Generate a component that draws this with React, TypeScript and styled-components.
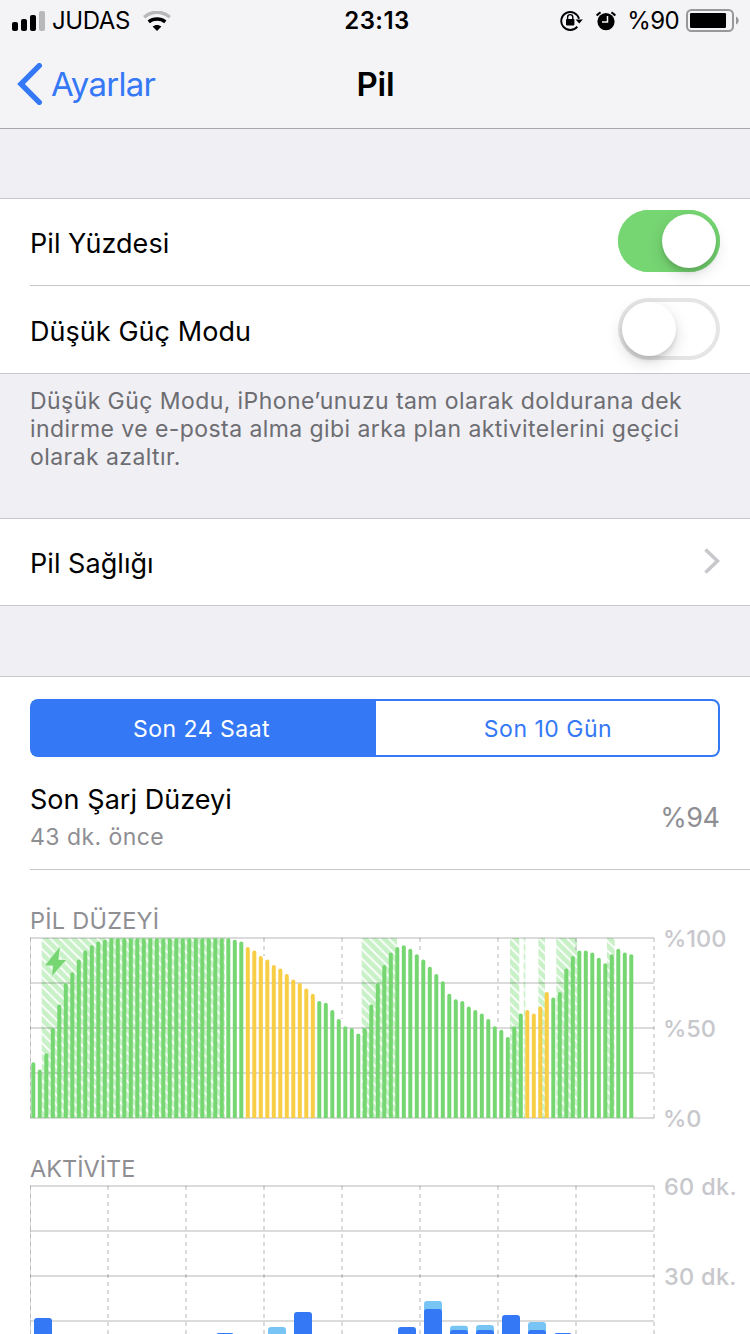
import React from "react";
import styled, { createGlobalStyle, css } from "styled-components";

const BLUE = "#3478f6";
const GREEN = "#76d672";
const YELLOW = "#f8ce46";
const HAIRLINE = "#c8c7cc";

const GlobalStyle = createGlobalStyle`
  * { box-sizing: border-box; }
  body {
    margin: 0;
    overflow: hidden;
    font-family: Inter, "Liberation Sans", sans-serif;
    color: #000;
  }
`;

const Screen = styled.div`
  width: 750px;
  height: 1334px;
  overflow: hidden;
  display: flex;
  flex-direction: column;
  background: #efeff4;
`;

const Header = styled.header`
  flex: none;
  height: 129px;
  background: #f4f4f7;
  border-bottom: 1px solid #a7a7aa;
`;

const StatusBar = styled.div`
  height: 40px;
  padding: 0 11px 0 12px;
  display: grid;
  grid-template-columns: 1fr auto 1fr;
  align-items: center;
  font-size: 24px;
  line-height: 40px;
`;

const StatusSide = styled.div<{ $end?: boolean }>`
  display: flex;
  align-items: center;
  height: 40px;
  justify-content: ${(p) => (p.$end ? "flex-end" : "flex-start")};
`;

const Carrier = styled.span`
  margin: 1px 13px 0 7px;
  font-size: 24px;
  letter-spacing: -0.4px;
`;

const Clock = styled.span`
  font-weight: 600;
  font-size: 24px;
  letter-spacing: 0.4px;
  padding: 1px 0 0 3px;
`;

const Percent = styled.span`
  margin: 1px 7px 0 12px;
  font-size: 24px;
  letter-spacing: -0.6px;
`;

const NavBar = styled.nav`
  height: 88px;
  padding: 0 17px;
  display: grid;
  grid-template-columns: 1fr auto 1fr;
  align-items: center;
`;

const BackLink = styled.a`
  display: flex;
  align-items: center;
  gap: 8px;
  color: ${BLUE};
  font-size: 33px;
  letter-spacing: -0.75px;
`;

const NavTitle = styled.h1`
  margin: 0 0 0 1px;
  font-size: 33px;
  font-weight: 600;
  letter-spacing: -0.2px;
`;

const Group = styled.section<{ $top: number }>`
  flex: none;
  margin-top: ${(p) => p.$top}px;
  background: #fff;
  border-top: 1px solid ${HAIRLINE};
  border-bottom: 1px solid ${HAIRLINE};
`;

const Row = styled.div<{ $height: number; $divided?: boolean }>`
  height: ${(p) => p.$height}px;
  margin-left: 30px;
  padding-right: 30px;
  display: flex;
  align-items: center;
  justify-content: space-between;
  ${(p) => p.$divided && css`border-bottom: 1px solid ${HAIRLINE};`}
`;

const RowTitle = styled.span<{ $drop?: number }>`
  font-size: 27px;
  line-height: 34px;
  letter-spacing: 0.05px;
  padding-top: ${(p) => p.$drop ?? 3}px;
`;

const Switch = styled.span<{ $on?: boolean }>`
  width: 102px;
  height: 62px;
  margin-top: ${(p) => (p.$on ? -2 : -1)}px;
  border-radius: 31px;
  padding: 4px;
  display: flex;
  justify-content: ${(p) => (p.$on ? "flex-end" : "flex-start")};
  background: ${(p) => (p.$on ? GREEN : "#fff")};
  box-shadow: inset 0 0 0 4px ${(p) => (p.$on ? GREEN : "#e5e5e5")};
`;

const Knob = styled.span`
  width: 54px;
  height: 54px;
  border-radius: 50%;
  background: #fff;
  box-shadow: 0 6px 16px rgba(0, 0, 0, 0.15), 0 4px 4px rgba(0, 0, 0, 0.1);
`;

const Footnote = styled.p`
  flex: none;
  height: 144px;
  margin: 0;
  padding: 13px 30px 0;
  font-size: 23px;
  line-height: 28px;
  letter-spacing: 0.43px;
  color: #6d6d72;
  white-space: pre-line;
`;

const Panel = styled(Group)`
  height: 700px;
  padding-top: 22px;
`;

const Segmented = styled.div`
  height: 58px;
  margin: 0 30px;
  padding: 2px;
  display: flex;
  background: ${BLUE};
  border-radius: 8px;
`;

const Segment = styled.button<{ $active?: boolean }>`
  flex: none;
  width: ${(p) => (p.$active ? 344 : 342)}px;
  border: 0;
  border-radius: ${(p) => (p.$active ? "0" : "0 6px 6px 0")};
  padding: ${(p) => (p.$active ? "2px 5px 0 0" : "2px 0 0 2px")};
  font: 400 23px Inter, sans-serif;
  letter-spacing: 0.5px;
  color: ${(p) => (p.$active ? "#fff" : BLUE)};
  background: ${(p) => (p.$active ? BLUE : "#fff")};
`;

const ChargeRow = styled.div`
  height: 113px;
  margin-left: 30px;
  padding: 24px 30px 0 0;
  display: flex;
  justify-content: space-between;
  border-bottom: 1px solid ${HAIRLINE};
`;

const ChargeLabel = styled.div`
  display: flex;
  flex-direction: column;
  gap: 3px;
`;

const ChargeTitle = styled.span`
  font-size: 27px;
  line-height: 38px;
  letter-spacing: 0.05px;
`;

const ChargeTime = styled.span`
  font-size: 23px;
  line-height: 30px;
  letter-spacing: 0.45px;
  color: #8e8e93;
`;

const ChargeValue = styled.span`
  padding: 19px 0.5px 0 0;
  font-size: 27px;
  line-height: 36px;
  letter-spacing: -0.5px;
  color: #8e8e93;
`;

const ChartTitle = styled.h2<{ $top: number; $tracking?: number }>`
  margin: ${(p) => p.$top}px 0 0 30px;
  height: 31px;
  font-size: 23.5px;
  line-height: 30px;
  font-weight: 400;
  letter-spacing: ${(p) => p.$tracking ?? 0}px;
  color: #8e8e93;
`;

const ChartRow = styled.div`
  display: flex;
  padding-left: 30px;
  height: 182px;
  & > svg { flex: none; display: block; }
`;

const Axis = styled.div<{ $left: number; $tracking: number }>`
  margin: -13px 0 0 ${(p) => p.$left}px;
  display: flex;
  flex-direction: column;
  gap: 60px;
  font-size: 23.5px;
  line-height: 30px;
  font-weight: 500;
  letter-spacing: ${(p) => p.$tracking}px;
  color: #c7c7cc;
  white-space: nowrap;
`;

const levels: number[] = [
  31, 27, 36, 50, 63, 75, 81, 88, 93, 96, 98, 99,
  ...Array<number>(19).fill(100),
  99, 98, 95, 93, 90, 88, 85, 83, 80, 77, 75, 72, 69,
  65, 64, 60, 55, 51, 50, 47, 50, 63, 75, 85, 92, 95, 96, 94, 91, 88, 84, 80, 76,
  69, 66, 65, 62, 60, 58, 55, 51, 49, 45, 51, 58, 60, 58, 62, 70, 67, 70, 83, 90,
  93, 93, 92, 89, 86, 91, 94, 92, 91,
];

const lowPower = (i: number) => (i >= 33 && i <= 43) || (i >= 76 && i <= 79);

/* charging spans, [start, end] along the plot */
const charging: [number, number][] = [
  [11.7, 195], [331.7, 367], [480, 489.3], [493.7, 495.3], [508.3, 515], [526.3, 547], [577, 584.7],
];

const GRID = "rgba(0,0,0,0.14)";

const Grid = ({ rows, ends }: { rows: number; ends: number[] }) => (
  <g>
    {Array.from({ length: rows }, (_, i) => (
      <rect key={`h${i}`} x={0} y={i * 45} width={624} height={2} fill={GRID} />
    ))}
    <rect x={0} y={1} width={1} height={180} fill={GRID} />
    {ends.map((end, i) => (
      <line
        key={`v${i}`}
        x1={i === 0 ? 0.5 : i * 78}
        x2={i === 0 ? 0.5 : i * 78}
        y1={1}
        y2={end}
        stroke={GRID}
        strokeWidth={i === 0 ? 1 : 2}
        strokeDasharray="4 4"
      />
    ))}
  </g>
);

const BatteryChart = () => (
  <svg width={626} height={182} viewBox="0 0 626 182">
    <defs>
      <pattern id="hatch" width={9.4} height={9.4} patternUnits="userSpaceOnUse">
        <rect width={9.4} height={9.4} fill="#c9f1c8" />
        <path d="M-2 -2L11.4 11.4M-2 7.4L2 11.4M7.4 -2L11.4 2" stroke="#fff" strokeWidth={1.8} />
      </pattern>
    </defs>
    {charging.map(([a, b]) => (
      <rect key={a} x={a} y={1} width={b - a} height={180} fill="url(#hatch)" />
    ))}
    <Grid rows={5} ends={[181, 1, 1, 19, 82, 13, 85, 13, 181]} />
    {levels.map((v, i) => {
      const y = 181 - v * 1.8;
      return (
        <path
          key={i}
          d={`M${1.3 + i * 6.5} 181V${y + 2}q0-2 2-2t2 2V181z`}
          fill={lowPower(i) ? YELLOW : GREEN}
        />
      );
    })}
    <path
      d="M29.8 10L15 28.5h8.300L21.800 39 36 23h-7.700z"
      fill={GREEN}
      stroke="#d8f5d7"
      strokeWidth={2}
      paintOrder="stroke"
    />
  </svg>
);

type Activity = { slot: number; on: number; off?: number };
const activity: Activity[] = [
  { slot: 0, on: 133 },
  { slot: 7, on: 148 },
  { slot: 9, on: 160, off: 142 },
  { slot: 10, on: 127 },
  { slot: 14, on: 142 },
  { slot: 15, on: 124, off: 116 },
  { slot: 16, on: 145, off: 140.7 },
  { slot: 17, on: 145, off: 140 },
  { slot: 18, on: 130 },
  { slot: 19, on: 145, off: 137 },
  { slot: 20, on: 148 },
];

const ActivityChart = () => (
  <svg width={626} height={182} viewBox="0 0 626 182">
    <Grid rows={5} ends={Array<number>(9).fill(181)} />
    {activity.map(({ slot, on, off }) => (
      <g key={slot}>
        {off !== undefined && (
          <rect x={4 + slot * 26} y={off} width={18} height={181 - off} rx={3} fill="#78c5f5" />
        )}
        <rect x={4 + slot * 26} y={on} width={18} height={181 - on} rx={3} fill={BLUE} />
      </g>
    ))}
  </svg>
);

const SignalIcon = () => (
  <svg width={33} height={20} viewBox="0 0 33 20">
    <rect x={0} y={11} width={6} height={9} rx={2} />
    <rect x={9} y={8} width={6} height={12} rx={2} />
    <rect x={18} y={4} width={6} height={16} rx={2} />
    <rect x={27} y={0} width={6} height={20} rx={2} fill="#b8b8ba" />
  </svg>
);

const WifiIcon = () => (
  <svg width={28} height={20} viewBox="0 0 28 20">
    <path d="M1.200 6.200C8.500-.4 19.500-.4 26.800 6.200" fill="none" stroke="#b8b8ba" strokeWidth={3.4} />
    <path d="M5.700 10.900c4.800-3.800 11.800-3.800 16.600 0" fill="none" stroke="#000" strokeWidth={3.6} />
    <path d="M9.600 15.600c2.600-2.300 6.200-2.300 8.800 0L14 20z" />
  </svg>
);

const LockIcon = () => (
  <svg width={23} height={22} viewBox="0 0 23 22">
    <path d="M17.300 16.600A9 9 0 1 1 19 8.800" fill="none" stroke="#000" strokeWidth={1.9} />
    <path d="M15.600 9.400h7.200L19.200 13.600z" />
    <rect x={6} y={9} width={8.4} height={6.4} rx={0.8} />
    <path d="M7.600 9.500V7.200a2.600 2.600 0 0 1 5.200 0v2.300" fill="none" stroke="#000" strokeWidth={1.4} />
  </svg>
);

const AlarmIcon = () => (
  <svg width={20} height={20} viewBox="0 0 20 20">
    <circle cx={10} cy={10.6} r={8.6} />
    <path d="M.8 4.600A12 12 0 0 1 4.600 1.400M15.400 1.400a12 12 0 0 1 3.800 3.200" fill="none" stroke="#000" strokeWidth={2.2} />
    <path d="M11.500 5v6H6" fill="none" stroke="#f4f4f7" strokeWidth={1.5} />
  </svg>
);

const BatteryIcon = () => (
  <svg width={53} height={23} viewBox="0 0 53 23">
    <rect x={1} y={1} width={46} height={21} rx={4.5} fill="none" stroke="#98989a" strokeWidth={2} />
    <rect x={4} y={4} width={36} height={15} rx={1.2} />
    <path d="M50 7.500c3.600 1.500 3.600 6.500 0 8z" fill="#98989a" />
  </svg>
);

const BackIcon = () => (
  <svg width={26} height={42} viewBox="0 0 26 42">
    <path d="M22.300 2.700L4 21l18.300 18.300" fill="none" stroke={BLUE} strokeWidth={5.4} strokeLinecap="round" />
  </svg>
);

const ChevronIcon = () => (
  <svg width={16} height={26} viewBox="0 0 16 26">
    <path d="M1.500 1.500L13.500 13 1.500 24.500" fill="none" stroke="#c7c7cc" strokeWidth={3.6} />
  </svg>
);

const AlarmSlot = styled.span`
  display: flex;
  margin: 0 -1px 0 13px;
`;

const ChevronSlot = styled.span`
  display: flex;
  margin-top: -2px;
`;

export default function App() {
  return (
    <>
      <GlobalStyle />
      <Screen>
        <Header>
          <StatusBar>
            <StatusSide>
              <SignalIcon />
              <Carrier>JUDAS</Carrier>
              <WifiIcon />
            </StatusSide>
            <Clock>23:13</Clock>
            <StatusSide $end>
              <LockIcon />
              <AlarmSlot><AlarmIcon /></AlarmSlot>
              <Percent>%90</Percent>
              <BatteryIcon />
            </StatusSide>
          </StatusBar>
          <NavBar>
            <BackLink><BackIcon />Ayarlar</BackLink>
            <NavTitle>Pil</NavTitle>
          </NavBar>
        </Header>

        <Group $top={69}>
          <Row $height={87} $divided>
            <RowTitle>Pil Yüzdesi</RowTitle>
            <Switch $on><Knob /></Switch>
          </Row>
          <Row $height={87}>
            <RowTitle $drop={5}>Düşük Güç Modu</RowTitle>
            <Switch><Knob /></Switch>
          </Row>
        </Group>
        <Footnote>
          {"Düşük Güç Modu, iPhone’unuzu tam olarak doldurana dek\nindirme ve e-posta alma gibi arka plan aktivitelerini geçici\nolarak azaltır."}
        </Footnote>

        <Group $top={0}>
          <Row $height={86}>
            <RowTitle>Pil Sağlığı</RowTitle>
            <ChevronSlot><ChevronIcon /></ChevronSlot>
          </Row>
        </Group>

        <Panel $top={70}>
          <Segmented>
            <Segment $active>Son 24 Saat</Segment>
            <Segment>Son 10 Gün</Segment>
          </Segmented>
          <ChargeRow>
            <ChargeLabel>
              <ChargeTitle>Son Şarj Düzeyi</ChargeTitle>
              <ChargeTime>43 dk. önce</ChargeTime>
            </ChargeLabel>
            <ChargeValue>%94</ChargeValue>
          </ChargeRow>
          <ChartTitle $top={36} $tracking={0.25}>PİL DÜZEYİ</ChartTitle>
          <ChartRow>
            <BatteryChart />
            <Axis $left={7} $tracking={0}><span>%100</span><span>%50</span><span>%0</span></Axis>
          </ChartRow>
          <ChartTitle $top={35}>AKTİVİTE</ChartTitle>
          <ChartRow>
            <ActivityChart />
            <Axis $left={8} $tracking={0.3}><span>60 dk.</span><span>30 dk.</span></Axis>
          </ChartRow>
        </Panel>
      </Screen>
    </>
  );
}
